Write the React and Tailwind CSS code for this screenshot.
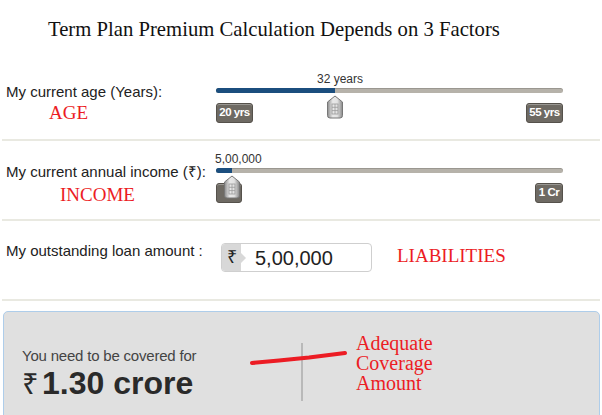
import React from "react";

const sans = { fontFamily: '"Liberation Sans", Arial, sans-serif' };
const serif = { fontFamily: '"Liberation Serif", "Times New Roman", serif' };

function Thumb() {
  return (
    <svg width="18" height="24" viewBox="0 0 18 24">
      <defs>
        <linearGradient id="tg" x1="0" x2="1" y1="0" y2="0">
          <stop offset="0" stopColor="#8c8c8c" />
          <stop offset="0.35" stopColor="#e8e8e8" />
          <stop offset="0.65" stopColor="#e2e2e2" />
          <stop offset="1" stopColor="#888" />
        </linearGradient>
      </defs>
      <path d="M1.5 7 L9 1 L16.5 7 V20.5 Q16.5 23 14 23 H4 Q1.5 23 1.5 20.5 Z" fill="url(#tg)" stroke="#777" />
      <rect x="6" y="9" width="6" height="10" fill="none" stroke="#9a9a9a" strokeWidth="0.8" />
      <line x1="9" y1="9" x2="9" y2="19" stroke="#9a9a9a" strokeWidth="0.8" />
      <line x1="6" y1="12.3" x2="12" y2="12.3" stroke="#9a9a9a" strokeWidth="0.8" />
      <line x1="6" y1="15.6" x2="12" y2="15.6" stroke="#9a9a9a" strokeWidth="0.8" />
    </svg>
  );
}

function Badge({ children, w }) {
  return (
    <div
      className="h-[20px] rounded-[3px] border border-[#55514b] bg-[#6e6a63] shadow-[inset_0_1px_0_rgba(255,255,255,0.3)] flex items-center justify-center text-white font-bold text-[11.5px] tracking-[-0.5px]"
      style={{ ...sans, width: w }}
    >
      {children}
    </div>
  );
}

function Slider({ pct, valueLabel, labelLeft, minLabel, maxLabel, minW, maxW }) {
  return (
    <div className="relative w-[347px] pt-[11px]">
      <div className="text-[12px] leading-[14px] text-[#333] whitespace-nowrap" style={{ ...sans, marginLeft: labelLeft }}>
        {valueLabel}
      </div>
      <div className="relative mt-[2px] h-[5px] rounded-full bg-[#b6b2aa] shadow-[inset_0_1px_0_rgba(0,0,0,0.15)]">
        <div className="absolute left-0 top-0 h-full rounded-l-full bg-[#1b4e7e]" style={{ width: pct + "%" }} />
      </div>
      <div className="mt-[10px] flex justify-between">
        <Badge w={minW}>{minLabel}</Badge>
        <Badge w={maxW}>{maxLabel}</Badge>
      </div>
      <div className="absolute top-[34px]" style={{ left: `calc(${pct}% - 9px)` }}>
        <Thumb />
      </div>
    </div>
  );
}

export default function App() {
  return (
    <div className="w-[602px] h-[415px] overflow-hidden bg-white relative">
      <div className="h-[61px] pl-[48px] pt-[17px]">
        <div className="text-[20.7px] leading-[24px] text-[#111]" style={serif}>
          Term Plan Premium Calculation Depends on 3 Factors
        </div>
      </div>

      <div className="mx-[2px] h-[80px] border-b-2 border-[#e9e9e1] flex">
        <div className="w-[214px] pl-[4px] pt-[22px]">
          <div className="text-[15px] leading-[17px] text-[#222]" style={sans}>My current age (Years):</div>
          <div className="ml-[43px] mt-[3px] text-[19px] leading-[20px] text-[#ec1c24]" style={serif}>AGE</div>
        </div>
        <Slider pct={34.3} valueLabel="32 years" labelLeft={101} minLabel="20 yrs" maxLabel="55 yrs" minW={37} maxW={37} />
      </div>

      <div className="mx-[2px] h-[80px] border-b-2 border-[#e9e9e1] flex">
        <div className="w-[214px] pl-[4px] pt-[22px]">
          <div className="text-[15px] leading-[17px] text-[#222]" style={sans}>My current annual income (₹):</div>
          <div className="ml-[54px] mt-[5px] text-[19px] leading-[20px] text-[#ec1c24]" style={serif}>INCOME</div>
        </div>
        <Slider pct={4.6} valueLabel="5,00,000" labelLeft={-1} minLabel="" maxLabel="1 Cr" minW={26} maxW={28} />
      </div>

      <div className="mx-[2px] h-[80px] border-b-2 border-[#e9e9e1] flex">
        <div className="w-[214px] pl-[4px] pt-[21px]">
          <div className="text-[15px] leading-[17px] text-[#222]" style={sans}>My outstanding loan amount :</div>
        </div>
        <div className="pt-[22px] ml-[5px]">
          <div className="relative w-[151px] h-[29px] rounded-[4px] border border-[#cfcfcf] bg-white flex items-stretch overflow-hidden">
            <div className="w-[19px] bg-[#d8d8d8] flex items-center justify-center text-[18px] text-[#222]" style={sans}>₹</div>
            <div className="absolute left-[19px] top-[9px] w-0 h-0 border-y-[5px] border-y-transparent border-l-[5px] border-l-[#d8d8d8]" />
            <div className="pl-[14px] flex items-center text-[20px] text-[#222]" style={sans}>5,00,000</div>
          </div>
        </div>
        <div className="ml-[25px] pt-[25px] text-[19px] leading-[20px] text-[#ec1c24]" style={serif}>LIABILITIES</div>
      </div>

      <div className="relative mt-[10px] ml-[3px] w-[597px] h-[120px] rounded-t-[5px] border border-[#aecdea] bg-[#e0e0e0] flex items-start">
        <div className="w-[297px] pl-[18px] pt-[35px]">
          <div className="text-[15px] leading-[17px] text-[#444] tracking-[-0.2px]" style={sans}>You need to be covered for</div>
          <div className="mt-[2px] flex items-baseline text-[#2a2a2a] font-bold text-[32px] leading-[34px]" style={sans}>
            <span className="font-normal text-[29px] mr-[3px]">₹</span>1.30 crore
          </div>
        </div>
        <div className="w-[2px] h-[58px] mt-[31px] bg-[#b9b9b9]" />
        <div className="ml-[53px] pt-[21px] text-[20px] leading-[20px] text-[#ec1c24]" style={serif}>
          <div>Adequate</div>
          <div>Coverage</div>
          <div>Amount</div>
        </div>
        <svg className="absolute left-[245px] top-[36px]" width="100" height="20" viewBox="0 0 100 20">
          <path d="M3 15 L30 12.5 L60 9.5 L96 5" stroke="#ec1c24" strokeWidth="4" strokeLinecap="round" fill="none" />
        </svg>
      </div>
    </div>
  );
}
